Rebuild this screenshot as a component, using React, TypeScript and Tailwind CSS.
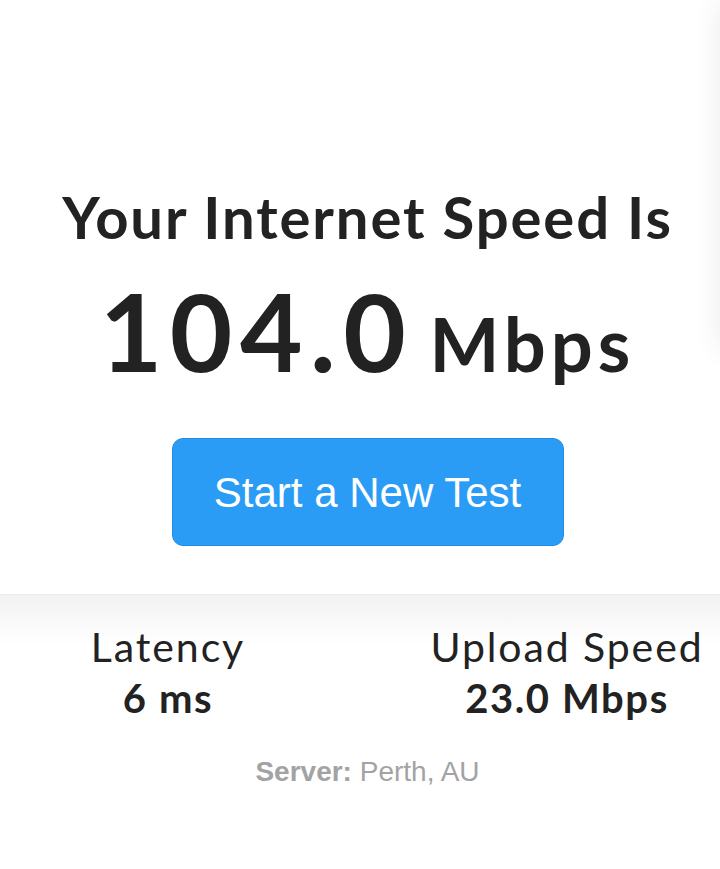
import React from "react";

export default function App() {
  return (
    <div className="relative w-[720px] h-[869px] overflow-hidden bg-white text-[#222222]">
      <div className="absolute left-[722px] top-[6px] w-[60px] h-[340px] bg-white shadow-[0_0_30px_rgba(0,0,0,0.10)]" />
      <div className="w-[735px] flex flex-col items-center">
        <h1
          className="mt-[188px] text-[58px] leading-none font-bold tracking-[1.9px]"
          style={{ fontFamily: "Lato, 'Noto Sans', sans-serif" }}
        >
          Your Internet Speed Is
        </h1>
        <div
          className="mt-[30px] flex items-baseline leading-none font-bold"
          style={{ fontFamily: "Lato, 'Noto Sans', sans-serif" }}
        >
          <span className="text-[108px] tracking-[7.5px]">104.0</span>
          <span className="ml-[16px] text-[74px] tracking-[5px]">Mbps</span>
        </div>
        <button
          className="mt-[54px] w-[392px] h-[108px] rounded-[11px] bg-[#2b9cf6] border border-[#1f8de6] text-white text-[42px]"
          style={{ fontFamily: "'Liberation Sans', Arial, sans-serif" }}
        >
          Start a New Test
        </button>
      </div>
      <div className="mt-[48px] w-[735px] border-t border-[#ececec] bg-[linear-gradient(to_bottom,#f2f2f2_0px,#ffffff_50px)]">
        <div
          className="pt-[27px] grid grid-cols-[336px_336px] gap-x-[63px]"
          style={{ fontFamily: "Lato, 'Noto Sans', sans-serif" }}
        >
          <div className="flex flex-col items-center">
            <div className="text-[41px] leading-[50px] tracking-[1.9px]">Latency</div>
            <div className="text-[40px] leading-[52px] font-bold tracking-[1.6px]">6 ms</div>
          </div>
          <div className="flex flex-col items-center">
            <div className="text-[41px] leading-[50px] tracking-[1.9px]">Upload Speed</div>
            <div className="text-[40px] leading-[52px] font-bold tracking-[1.6px]">23.0 Mbps</div>
          </div>
        </div>
        <div
          className="mt-[27px] text-center text-[28px] text-[#a3a3a3]"
          style={{ fontFamily: "'Liberation Sans', Arial, sans-serif" }}
        >
          <span className="font-bold">Server:</span> Perth, AU
        </div>
      </div>
    </div>
  );
}
